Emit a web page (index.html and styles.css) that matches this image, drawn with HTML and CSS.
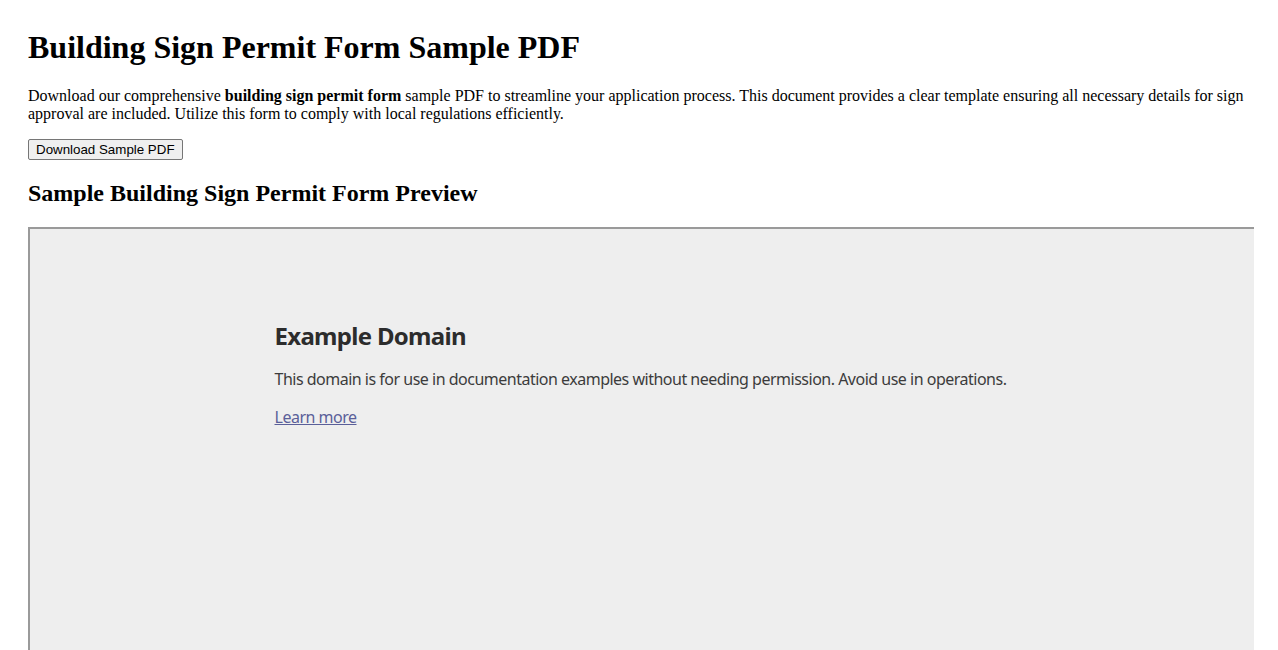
FILE: index.html
```html
<!DOCTYPE html>
<html lang="en">
<head>
    <meta charset="UTF-8">
    <meta name="viewport" content="width=device-width, initial-scale=1.0">
    <title>Building Sign Permit Form Sample PDF</title>
    <link rel="stylesheet" href="styles.css">
</head>
<body>
    <h1>Building Sign Permit Form Sample PDF</h1>
    <p>Download our comprehensive <strong>building sign permit form</strong> sample PDF to streamline your application process. This document provides a clear template ensuring all necessary details for sign approval are included. Utilize this form to comply with local regulations efficiently.</p>
    <button type="button" class="btn-download">Download Sample PDF</button>

    <h2>Sample Building Sign Permit Form Preview</h2>
    <div class="preview">
        <div class="preview-doc">
            <h3>Example Domain</h3>
            <p>This domain is for use in documentation examples without needing permission. Avoid use in operations.</p>
            <p><a href="#">Learn more</a></p>
        </div>
    </div>
</body>
</html>
```

FILE: styles.css
```css
body {
    margin: 29px 24px 28px 28px;
    font-family: 'Liberation Serif', 'Times New Roman', serif;
    color: #000;
    background: #fff;
}

h1 {
    font-size: 32px;
    margin: 0 0 21.44px;
}

h2 {
    font-size: 24px;
    margin: 19.92px 0;
}

p {
    font-size: 16px;
    margin: 16px 0;
}

.btn-download {
    font-family: 'Liberation Sans', Arial, sans-serif;
    font-size: 13.333px;
    color: #000;
    background-color: #efefef;
    border: 1px solid #767676;
    border-radius: 2px;
    padding: 2px 7px;
    margin: 0;
}

.preview {
    width: 100%;
    height: 600px;
    background-color: #eee;
    border-style: solid;
    border-width: 2px;
    border-color: #9a9a9a #e6e6e6 #e6e6e6 #9a9a9a;
    overflow: hidden;
}

.preview-doc {
    width: 737px;
    margin: 0 auto;
    padding-top: 90px;
    font-family: 'Noto Sans', 'Open Sans', sans-serif;
}

.preview-doc h3 {
    font-size: 24px;
    letter-spacing: -0.7px;
    color: #2c2c2c;
    margin: 0 0 16px;
}

.preview-doc p {
    font-size: 16px;
    letter-spacing: -0.5px;
    color: #3c3c3c;
    margin: 16px 0;
}

.preview-doc a {
    color: #5a5f99;
}
```
